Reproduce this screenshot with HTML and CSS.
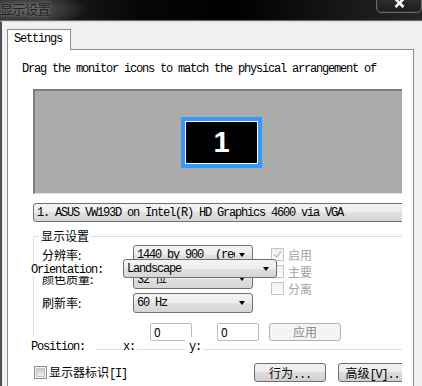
FILE: index.html
```html
<!doctype html>
<html lang="zh-CN">
  <head>
    <meta charset="UTF-8" />
    <title>显示设置</title>
    <link rel="stylesheet" href="styles.css">
  </head>

  <body>
    <!-- Title bar -->
    <div class="titlebar">
      <span class="title">显示设置</span>
      <span class="close">
        <svg width="11" height="10" viewBox="0 0 11 10">
          <path d="M1.5 1 L9.5 9 M9.5 1 L1.5 9" stroke="#fff" stroke-width="2.6" fill="none" />
        </svg>
      </span>
    </div>

    <div class="frame">
      <div class="tab m">Settings</div>

      <div class="panel">
        <div class="clip">
          <p class="intro m">Drag the monitor icons to match the physical arrangement of</p>

          <!-- Monitor arrangement -->
          <div class="monitors">
            <div class="monitor">1</div>
          </div>

          <div class="combo wide">
            <span class="combo-text m">1. ASUS VW193D on Intel(R) HD Graphics 4600 via VGA</span>
          </div>

          <!-- Display settings group -->
          <fieldset class="group">
            <legend>显示设置</legend>
            <div class="group-body">
              <div class="top">
                <div class="fields">
                  <div class="field">
                    <span class="label">分辨率:</span>
                    <div class="combo"><span class="combo-text m">1440 by 900  (recommended)</span></div>
                  </div>
                  <div class="field">
                    <span class="label">颜色质量:</span>
                    <div class="combo"><span class="combo-text"><span class="m">32 </span>位</span></div>
                  </div>
                  <div class="field">
                    <span class="label">刷新率:</span>
                    <div class="combo"><span class="combo-text m">60 Hz</span></div>
                  </div>
                </div>

                <div class="checks">
                  <div class="check">
                    <span class="cb">
                      <svg width="11" height="11" viewBox="0 0 11 11">
                        <path d="M2 5.5 L4.5 8 L9 2.5" stroke="#c2c2c2" stroke-width="1.6" fill="none" />
                      </svg>
                    </span>
                    启用
                  </div>
                  <div class="check"><span class="cb"></span>主要</div>
                  <div class="check"><span class="cb"></span>分离</div>
                </div>
              </div>

              <div class="edits">
                <div class="edit">0</div>
                <div class="edit second">0</div>
                <div class="btn disabled">应用</div>
              </div>

              <!-- Controls drawn over the group -->
              <span class="orientation m">Orientation:</span>
              <div class="combo landscape"><span class="combo-text m">Landscape</span></div>

              <div class="position-row m">
                <span class="pos-label">Position:</span>
                <span class="gap-a"></span>
                <span class="pos-x">x:</span>
                <span class="gap-b"></span>
                <span class="pos-y">y:</span>
              </div>
            </div>
          </fieldset>

          <div class="footer">
            <div class="id-check">
              <span class="cb active"><span class="cb-fill"></span></span>
              <span>显示器标识<span class="m">[I]</span></span>
            </div>
            <div class="btn">行为<span class="m">...</span></div>
            <div class="btn advanced">高级<span class="m">[V]...</span></div>
          </div>
        </div>
      </div>
    </div>
  </body>
</html>
```

FILE: styles.css
```css
body {
  margin: 0;
  width: 422px;
  height: 386px;
  overflow: hidden;
  background: #f0f0f0;
  color: #000;
  font-family: "Noto Sans CJK SC", sans-serif;
  font-size: 12px;
}

.m {
  font-family: "Liberation Mono", "Noto Sans CJK SC", monospace;
  font-size: 12px;
  letter-spacing: -1.2px;
}

/* Title bar */
.titlebar {
  display: flex;
  height: 20px;
  overflow: hidden;
  border-bottom: 1px solid #6e6e6e;
  background:
    radial-gradient(ellipse 60px 18px at 26px 9px, #5c5c5c 0, #3c3c3c 55%, rgba(40, 40, 40, 0) 100%),
    linear-gradient(to right, #2c2c2c 0, #070707 32%, #000 55%, #161616 80%, #262626 100%);
}

.title {
  font-size: 13px;
  line-height: 17px;
  letter-spacing: -0.5px;
  color: #222;
  text-shadow: 0 0 3px #808080, 0 0 6px #6a6a6a;
}

.close {
  display: flex;
  justify-content: center;
  align-items: flex-start;
  margin: -6px 0 0 auto;
  padding-top: 3px;
  width: 46px;
  height: 19px;
  box-sizing: border-box;
  border: 1px solid #6a6a6a;
  border-radius: 0 0 5px 5px;
  background: linear-gradient(#353535, #1c1c1c);
  box-shadow: inset 0 0 0 1px #2e2e2e;
}

/* Window body */
.frame {
  height: 365px;
  box-sizing: border-box;
  padding: 7px 0 0 5px;
  border-left: 2px solid #4e4e4e;
  border-top: 1px solid #d6d6d6;
}

.tab {
  position: relative;
  z-index: 1;
  width: 48px;
  height: 20px;
  margin-bottom: -1px;
  padding: 0 8px 0 6px;
  border: 1px solid #898c95;
  border-bottom: 0;
  background: #fff;
  line-height: 19px;
  white-space: nowrap;
}

.panel {
  width: 407px;
  height: 400px;
  box-sizing: border-box;
  border: 1px solid #898c95;
  background: #fff;
}

.clip {
  width: 394px;
  height: 100%;
  overflow: hidden;
}

.intro {
  margin: 0;
  padding: 12px 0 0 14px;
  line-height: 14px;
  white-space: nowrap;
}

.monitors {
  width: 400px;
  height: 105px;
  box-sizing: border-box;
  margin: 13px 0 0 25px;
  padding: 26px 0 0 146px;
  border-top: 2px solid #7d7d7d;
  border-left: 2px solid #7d7d7d;
  border-bottom: 1px solid #e2e2e2;
  background: #ababab;
}

.monitor {
  display: flex;
  align-items: center;
  justify-content: center;
  width: 81px;
  height: 51px;
  box-sizing: border-box;
  border: 4px solid #3399ff;
  box-shadow: inset 0 0 0 1px #fff;
  background: #000;
  color: #fff;
  font: bold 29px/1 "Liberation Sans", sans-serif;
}

/* Combo boxes */
.combo {
  display: flex;
  align-items: center;
  height: 20px;
  box-sizing: border-box;
  padding: 0 7px 0 3px;
  border: 1px solid #707070;
  border-radius: 3px;
  background: linear-gradient(#f4f4f4, #ececec 50%, #e0e0e0 50%, #d6d6d6);
}

.combo::after {
  content: "";
  flex: none;
  margin-left: 4px;
  border-top: 4px solid #000;
  border-left: 3.5px solid transparent;
  border-right: 3.5px solid transparent;
}

.combo-text {
  flex: 1;
  overflow: hidden;
  white-space: pre;
  line-height: 18px;
}

.combo.wide {
  width: 386px;
  height: 19px;
  margin: 9px 0 0 25px;
}

/* Group box */
.group {
  width: 400px;
  min-width: 0;
  box-sizing: border-box;
  margin: 7px 0 0 25px;
  padding: 0;
  border: 1px solid #d5dfe5;
  border-radius: 3px;
}

.group legend {
  margin-left: 5px;
  padding: 0 2px;
  line-height: 14px;
}

.group-body {
  position: relative;
  padding: 2px 0 8px 8px;
}

.top {
  display: flex;
}

.fields {
  display: flex;
  flex-direction: column;
  gap: 4px;
}

.field {
  display: flex;
  align-items: center;
  height: 20px;
}

.label {
  width: 91px;
  line-height: 14px;
}

.field .combo {
  width: 120px;
}

.checks {
  display: flex;
  flex-direction: column;
  gap: 4px;
  margin: 3px 0 0 18px;
}

.check {
  display: flex;
  align-items: center;
  gap: 4px;
  height: 13px;
  line-height: 13px;
  color: #a3a3a3;
}

.cb {
  display: flex;
  flex: none;
  align-items: center;
  justify-content: center;
  width: 13px;
  height: 13px;
  box-sizing: border-box;
  border: 1px solid #c4c4c4;
  background: linear-gradient(#f0f0f0, #fdfdfd);
}

.cb.active {
  border-color: #8e8f8f;
  background: #f4f4f4;
}

.cb-fill {
  width: 7px;
  height: 7px;
  border: 1px solid #c6c6c6;
  background: linear-gradient(#c9cccf, #eeeeee);
}

.edits {
  display: flex;
  margin: 10px 0 0 108px;
}

.edit {
  width: 42px;
  height: 18px;
  box-sizing: border-box;
  padding-left: 3px;
  border: 1px solid #b9bcc2;
  border-radius: 2px;
  line-height: 16px;
}

.edit.second {
  margin-left: 25px;
}

.btn {
  flex: none;
  width: 72px;
  height: 19px;
  box-sizing: border-box;
  border: 1px solid #707070;
  border-radius: 3px;
  background: linear-gradient(#f2f2f2, #ebebeb 50%, #dddddd 50%, #cfcfcf);
  text-align: center;
  line-height: 17px;
  white-space: nowrap;
}

.btn.disabled {
  height: 18px;
  margin-left: 10px;
  border-color: #adb2b5;
  background: #f4f4f4;
  color: #8a8a8a;
  line-height: 16px;
}

/* Overlapping controls */
.orientation {
  position: absolute;
  left: -3px;
  top: 21px;
  line-height: 12px;
  background: #fff;
}

.combo.landscape {
  position: absolute;
  z-index: 1;
  left: 89px;
  top: 16px;
  width: 154px;
  height: 19px;
}

.position-row {
  position: absolute;
  left: -4px;
  top: 94px;
  display: flex;
  line-height: 14px;
}

.position-row span {
  height: 17px;
  box-sizing: border-box;
  padding-top: 3px;
}

.pos-label {
  width: 66px;
  padding-left: 1px;
  background: #fff;
}

.gap-a {
  width: 27px;
}

.pos-x {
  width: 14px;
  background: #fff;
}

.gap-b {
  width: 48px;
}

.pos-y {
  width: 18px;
  padding-left: 4px;
  background: #fff;
}

/* Bottom row */
.footer {
  display: flex;
  align-items: center;
  width: 420px;
  height: 19px;
  margin: 13px 0 0 26px;
}

.id-check {
  display: flex;
  flex: none;
  align-items: center;
  gap: 2px;
  width: 220px;
  line-height: 14px;
}

.btn.advanced {
  width: 75px;
  margin-left: 12px;
}
```
